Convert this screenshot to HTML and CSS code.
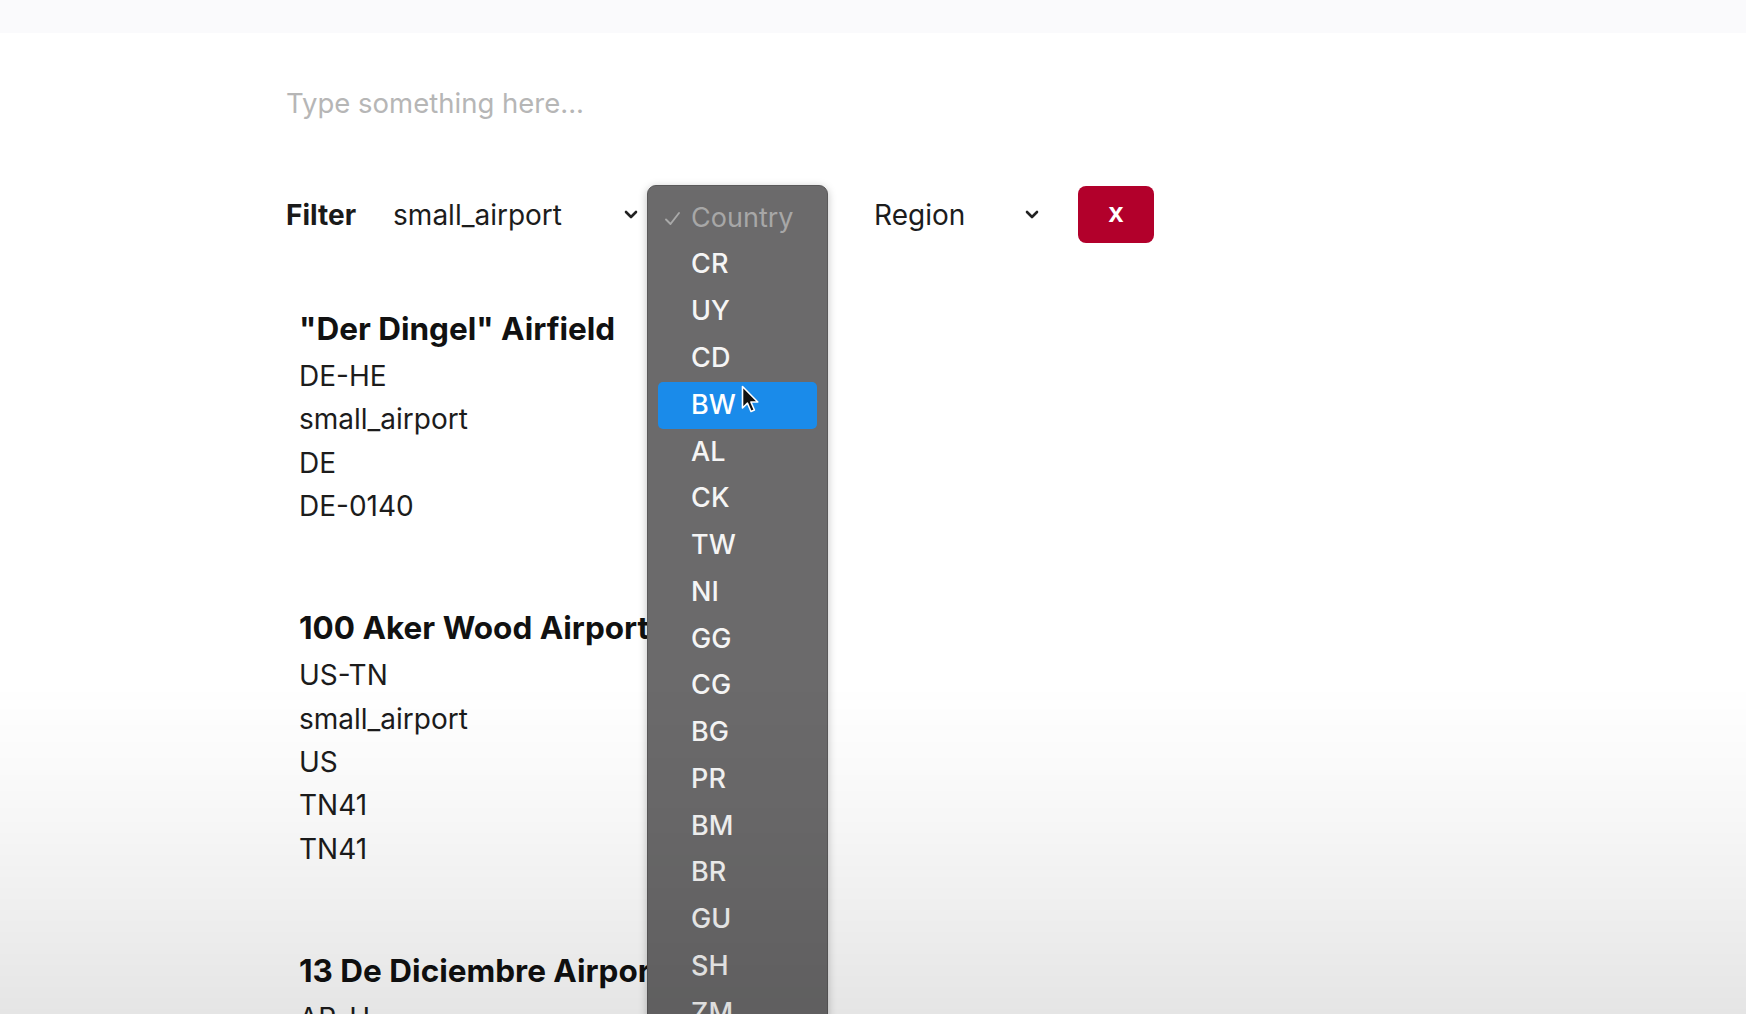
FILE: index.html
```html
<!DOCTYPE html>
<html lang="en">
<head>
<meta charset="utf-8">
<title>Airports</title>
<link rel="stylesheet" href="styles.css">
</head>
<body>
<div class="topband"></div>
<main class="page">
  <div class="search">Type something here...</div>
  <div class="filter-row">
    <span class="filter-label">Filter</span>
    <div class="select select-type">
      <span class="select-value">small_airport</span>
      <svg class="chev" width="14" height="9" viewBox="0 0 14 9"><polyline points="2,2 7,7 12,2" fill="none" stroke="#222" stroke-width="2.6" stroke-linecap="round" stroke-linejoin="round"/></svg>
    </div>
    <div class="select select-country">
      <span class="select-value covered">Country</span>
      <div class="popup">
        <div class="opt opt-checked"><svg class="check" width="17" height="15" viewBox="0 0 17 15"><polyline points="2,8.5 6.5,13 15,2" fill="none" stroke="#a9a9a9" stroke-width="1.9" stroke-linecap="round" stroke-linejoin="round"/></svg>Country</div>
        <div class="opt">CR</div>
        <div class="opt">UY</div>
        <div class="opt">CD</div>
        <div class="opt opt-active">BW</div>
        <div class="opt">AL</div>
        <div class="opt">CK</div>
        <div class="opt">TW</div>
        <div class="opt">NI</div>
        <div class="opt">GG</div>
        <div class="opt">CG</div>
        <div class="opt">BG</div>
        <div class="opt">PR</div>
        <div class="opt">BM</div>
        <div class="opt">BR</div>
        <div class="opt">GU</div>
        <div class="opt">SH</div>
        <div class="opt">ZM</div>
        <svg class="cursor" width="20" height="30" viewBox="0 0 20 30"><path d="M1.5 1.5 L1.5 23 L6.5 18.2 L10 26.5 L13.4 25 L9.9 17 L16.8 17 Z" fill="#111" stroke="#fff" stroke-width="1.6" stroke-linejoin="round"/></svg>
      </div>
    </div>
    <div class="select select-region">
      <span class="select-value">Region</span>
      <svg class="chev" width="14" height="9" viewBox="0 0 14 9"><polyline points="2,2 7,7 12,2" fill="none" stroke="#222" stroke-width="2.6" stroke-linecap="round" stroke-linejoin="round"/></svg>
    </div>
    <button class="clear-btn">x</button>
  </div>

  <section class="results">
    <article class="card">
      <h3 class="card-title">"Der Dingel" Airfield</h3>
      <div class="card-line">DE-HE</div>
      <div class="card-line">small_airport</div>
      <div class="card-line">DE</div>
      <div class="card-line">DE-0140</div>
    </article>
    <article class="card">
      <h3 class="card-title">100 Aker Wood Airport</h3>
      <div class="card-line">US-TN</div>
      <div class="card-line">small_airport</div>
      <div class="card-line">US</div>
      <div class="card-line">TN41</div>
      <div class="card-line">TN41</div>
    </article>
    <article class="card">
      <h3 class="card-title">13 De Diciembre Airport</h3>
      <div class="card-line">AR-U</div>
      <div class="card-line">small_airport</div>
      <div class="card-line">AR</div>
    </article>
  </section>
</main>
<div class="vignette"></div>
</body>
</html>
```
FILE: styles.css
```css
html, body {
  margin: 0;
  padding: 0;
  height: 100%;
  overflow: hidden;
  background: #ffffff;
}

body {
  font-family: Inter, "Liberation Sans", Arial, sans-serif;
  color: #1c1c1c;
}

.topband {
  height: 33px;
  background: #fafafc;
}

.page {
  padding-left: 286px;
  display: flex;
  flex-direction: column;
}

.search {
  margin-top: 48px;
  height: 44px;
  line-height: 44px;
  padding-left: 0;
  font-size: 27.5px;
  color: #b6b6b6;
}

.filter-row {
  margin-top: 61px;
  height: 57px;
  display: flex;
  align-items: center;
}

.filter-label {
  font-weight: 700;
  font-size: 28px;
  color: #1a1a1a;
  margin-right: 17px;
}

.select {
  position: relative;
  height: 57px;
  display: flex;
  align-items: center;
  justify-content: space-between;
  padding: 0 15px 0 20px;
  box-sizing: border-box;
  font-size: 28px;
  color: #1c1c1c;
}

.select-type { width: 280px; }
.select-country { width: 201px; }
.select-region { width: 200px; }

.covered { visibility: hidden; }

.chev { display: block; }

.popup {
  position: absolute;
  left: -6px;
  top: -1px;
  width: 181px;
  height: 860px;
  box-sizing: border-box;
  padding: 8.7px 10px 0 10px;
  background: #6b6a6b;
  border: 1px solid #5a595a;
  border-radius: 9px;
  box-shadow: 0 2px 8px rgba(0, 0, 0, 0.25);
  z-index: 5;
}

.opt {
  position: relative;
  height: 46.77px;
  line-height: 46.77px;
  padding-left: 33px;
  font-size: 27px;
  font-weight: 500;
  color: #f5f5f5;
  border-radius: 5px;
}

.opt-checked {
  color: #a7a7a7;
  font-weight: 400;
}

.check {
  position: absolute;
  left: 6px;
  top: 16px;
}

.opt-active {
  background: #1a8bea;
  color: #ffffff;
}

.cursor {
  position: absolute;
  left: 93px;
  top: 199px;
}

.clear-btn {
  margin-left: 24px;
  width: 76px;
  height: 57px;
  border: none;
  border-radius: 8px;
  background: #b2002b;
  color: #ffffff;
  font-family: "Liberation Sans", Arial, sans-serif;
  font-weight: 700;
  font-size: 27px;
  line-height: 1;
  padding: 0 0 3px 0;
}

.results {
  margin-top: 59px;
  padding-left: 13px;
  display: flex;
  flex-direction: column;
  gap: 72.5px;
}

.card-title {
  margin: 0;
  font-size: 31.5px;
  font-weight: 700;
  line-height: 53px;
  color: #111111;
}

.card-line {
  font-size: 28px;
  line-height: 43.4px;
}

.vignette {
  position: fixed;
  left: 0;
  right: 0;
  bottom: 0;
  height: 330px;
  background: linear-gradient(to bottom, rgba(0, 0, 0, 0) 0%, rgba(0, 0, 0, 0.03) 40%, rgba(0, 0, 0, 0.1) 100%);
  pointer-events: none;
  z-index: 10;
}
```
